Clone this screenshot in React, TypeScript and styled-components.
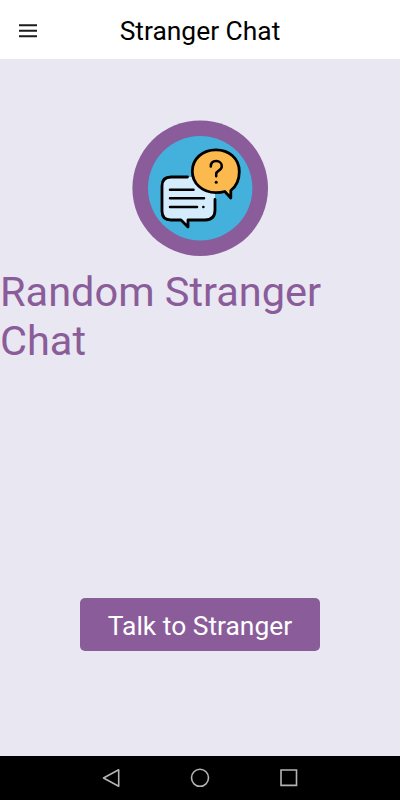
import React from "react";
import styled, { createGlobalStyle } from "styled-components";

const GlobalStyle = createGlobalStyle`
  body { margin: 0; background: #e9e7f1; }
  * { box-sizing: border-box; }
`;

const Screen = styled.div`
  display: flex;
  flex-direction: column;
  width: 100%;
  height: 100vh;
  min-height: 560px;
  overflow: hidden;
  background: #e9e7f1;
  font-family: Roboto, "Liberation Sans", sans-serif;
`;

const TopBar = styled.header`
  display: grid;
  grid-template-columns: 56px 1fr 56px;
  align-items: center;
  flex: none;
  height: 59px;
  padding-top: 2px;
  background: #fff;
`;

const MenuButton = styled.button`
  display: flex;
  width: 20px;
  height: 14px;
  margin-left: 18px;
  padding: 0;
  border: 0;
  background: none;
`;

const Title = styled.h1`
  margin: 0;
  text-align: center;
  font-size: 26.4px;
  line-height: 32px;
  font-weight: 400;
  color: #000;
  white-space: nowrap;
`;

const Content = styled.main`
  display: flex;
  flex: 1;
  flex-direction: column;
  align-items: center;
  padding-top: 61px;
`;

const Logo = styled.svg`
  flex: none;
  display: block;
  width: 136px;
  height: 136px;
`;

const Heading = styled.h2`
  width: 100%;
  margin: 12px 0 0;
  font-size: 41.5px;
  line-height: 48.5px;
  font-weight: 400;
  color: #8a5c9a;
`;

const TalkButton = styled.button`
  width: 240px;
  height: 53px;
  margin: auto 0 105px;
  padding: 2px 0 0;
  border: 0;
  border-radius: 5px;
  background: #8a5c9a;
  color: #fff;
  font-family: inherit;
  font-size: 26.4px;
  line-height: 32px;
  white-space: nowrap;
`;

const NavBar = styled.nav`
  display: flex;
  flex: none;
  justify-content: center;
  align-items: center;
  gap: 68px;
  height: 44px;
  background: #000;
`;

const NavIcon = styled.svg`
  display: block;
  width: 21px;
  height: 20px;
  fill: none;
  stroke: #b4b4b4;
  stroke-width: 1.6;
  stroke-linejoin: round;
`;

export default function App() {
  return (
    <Screen>
      <GlobalStyle />
      <TopBar>
        <MenuButton aria-label="Menu">
          <svg width="20" height="14" viewBox="0 0 20 14">
            <path d="M1 1.3H19M1 6.800H19M1 12.300H19" stroke="#1c1c1c" strokeWidth="2" />
          </svg>
        </MenuButton>
        <Title>Stranger Chat</Title>
      </TopBar>
      <Content>
        <Logo viewBox="132 120 136 136" fill="none" stroke="#000" strokeWidth="2.8" strokeLinecap="round" strokeLinejoin="round">
          <circle cx="200.2" cy="188.2" r="67.800" fill="#8a5c9a" stroke="none" />
          <circle cx="200.2" cy="188.2" r="52.200" fill="#43b1dc" stroke="none" />
          <path d="M171 177H215V210Q215 220 205 220H188V227L181 220H171Q162 220 162 211V186Q162 177 171 177Z" fill="#d4ecfb" stroke="none" />
          <path d="M187.5 177H171Q162 177 162 186V211Q162 220 171 220H181L188 227V220H205Q215 220 215 210V199.500" />
          <path d="M170 189.700H193.500M170 198.300H204M170 207H197M203.300 207H203.400" strokeWidth="2.500" />
          <path d="M230.800 198V190.500C236 186.500 239.300 180.500 239.300 171.500C239.300 158.500 229 149.800 216 149.800C202.500 149.800 192.300 158.800 192.300 171.200C192.300 183.500 202.500 192.700 216 192.700C219 192.700 222 192.400 224.800 191.500Z" fill="#fcb94e" />
          <path d="M210.800 166.500C210.800 163 213 161 216.200 161C219.600 161 221.800 163.300 221.800 166.300C221.800 171 216.200 170.300 216.200 174V176.300" strokeWidth="2.500" />
          <circle cx="216.200" cy="182.200" r="1.500" fill="#000" stroke="none" />
        </Logo>
        <Heading>Random Stranger Chat</Heading>
        <TalkButton>Talk to Stranger</TalkButton>
      </Content>
      <NavBar>
        <NavIcon viewBox="0 0 21 20"><path d="M2.500 10L17.700 1.800V18.200Z" /></NavIcon>
        <NavIcon viewBox="0 0 21 20"><circle cx="10" cy="9.800" r="8.500" /></NavIcon>
        <NavIcon viewBox="0 0 21 20"><path d="M2 2H17.500V17.400H2Z" strokeLinejoin="miter" /></NavIcon>
      </NavBar>
    </Screen>
  );
}
